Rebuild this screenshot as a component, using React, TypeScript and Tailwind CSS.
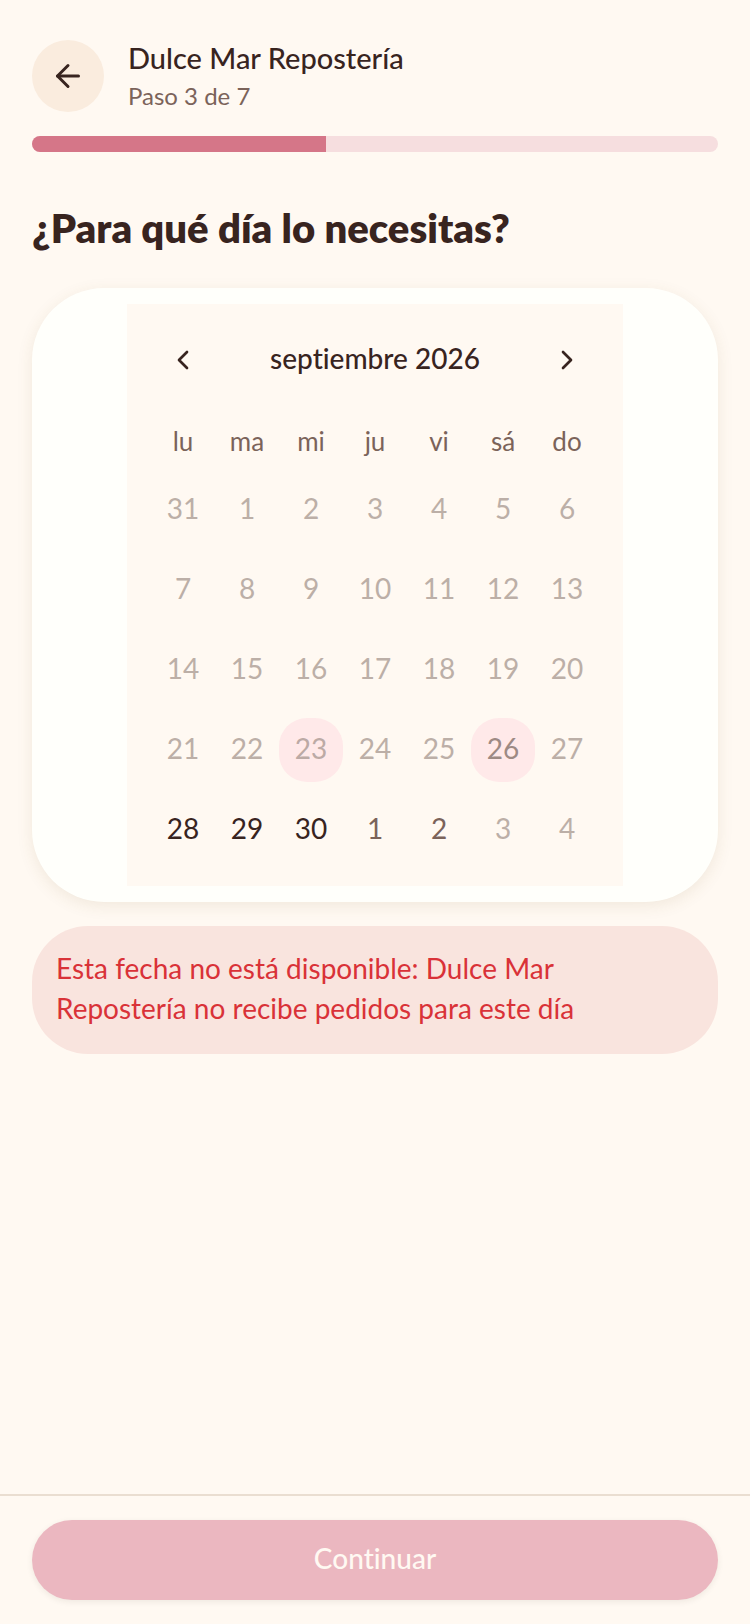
import { useState } from "react";
import { ArrowLeft, ChevronLeft, ChevronRight } from "lucide-react";

interface Day {
    num: number;
    state: "disabled" | "today" | "blocked" | "available" | "outside";
}

const STEP = 3;
const TOTAL_STEPS = 7;

const weekdays = ["lu", "ma", "mi", "ju", "vi", "sá", "do"];

const dayStyles = {
    disabled: "text-[#bcafa7]",
    today: "bg-[#ffe9e9] text-[#bcaaa5]",
    blocked: "bg-[#ffe9e9] text-[#9d8a84]",
    available: "text-[#38241f]",
    outside: "text-[#7b635a]",
};

const disabledDays = (nums: number[]): Day[] => nums.map((num) => ({ num, state: "disabled" }));

const weeks: Day[][] = [
    disabledDays([31, 1, 2, 3, 4, 5, 6]),
    disabledDays([7, 8, 9, 10, 11, 12, 13]),
    disabledDays([14, 15, 16, 17, 18, 19, 20]),
    [
        ...disabledDays([21, 22]),
        { num: 23, state: "today" },
        ...disabledDays([24, 25]),
        { num: 26, state: "blocked" },
        ...disabledDays([27]),
    ],
    [
        { num: 28, state: "available" },
        { num: 29, state: "available" },
        { num: 30, state: "available" },
        { num: 1, state: "outside" },
        { num: 2, state: "outside" },
        ...disabledDays([3, 4]),
    ],
];

function Header() {
    return (
        <header className="px-8 pt-10">
            <div className="flex items-center gap-6">
                <button aria-label="Volver" className="flex size-18 items-center justify-center rounded-full bg-[#faecde]">
                    <ArrowLeft className="size-9" />
                </button>
                <div className="flex flex-col gap-1">
                    <p className="text-[29px] leading-9 font-medium">Dulce Mar Repostería</p>
                    <p className="text-2xl leading-8 text-[#7b635a]">Paso {STEP} de {TOTAL_STEPS}</p>
                </div>
            </div>
            <div className="mt-6 h-4 overflow-hidden rounded-full bg-[#f6dedf]">
                <div className="h-full bg-[#d57688]" style={{ width: `${(STEP / TOTAL_STEPS) * 100}%` }} />
            </div>
        </header>
    );
}

function Calendar() {
    const [selected, setSelected] = useState("");

    return (
        <div className="w-fit bg-[#fff9f2] p-6">
            <div className="flex h-16 items-center justify-between">
                <button aria-label="Mes anterior" className="flex size-16 items-center justify-center">
                    <ChevronLeft className="size-8" />
                </button>
                <p className="pb-1 text-[28px] leading-10 font-medium">septiembre 2026</p>
                <button aria-label="Mes siguiente" className="flex size-16 items-center justify-center">
                    <ChevronRight className="size-8" />
                </button>
            </div>

            <table className="mt-8 block">
                <thead className="block">
                    <tr className="flex">
                        {weekdays.map((day) => (
                            <th key={day} scope="col" className="w-16 pb-1 text-[26px] leading-[34px] font-normal text-[#7b635a]">{day}</th>
                        ))}
                    </tr>
                </thead>
                <tbody className="block">
                    {weeks.map((week, i) => (
                        <tr key={i} className="mt-4 flex">
                            {week.map((day) => (
                                <td key={day.num} className="size-16">
                                    <button
                                        disabled={day.state !== "available" && day.state !== "outside"}
                                        aria-pressed={selected === `${i}-${day.num}`}
                                        onClick={() => setSelected(`${i}-${day.num}`)}
                                        className={`size-16 rounded-[28px] pb-1 text-[28px] leading-10 aria-pressed:bg-[#faecde] ${dayStyles[day.state]}`}
                                    >
                                        {day.num}
                                    </button>
                                </td>
                            ))}
                        </tr>
                    ))}
                </tbody>
            </table>
        </div>
    );
}

export default function App() {
    return (
        <div className="flex min-h-screen flex-col bg-[#fff9f2] font-['Lato','Noto_Sans',sans-serif] text-[#38241f] [font-variant-ligatures:none]">
            <Header />

            <main className="flex flex-1 flex-col px-8 pt-12 pb-8">
                <h1 className="text-[40px] leading-14 font-extrabold">¿Para qué día lo necesitas?</h1>

                <div className="mt-8 flex justify-center rounded-[72px] bg-[#fffffb] p-4 shadow-[0_4px_16px_rgba(120,90,40,0.1)]">
                    <Calendar />
                </div>

                <div role="alert" className="mt-6 rounded-[56px] bg-[#f9e4de] pt-[22px] pr-12 pb-[26px] pl-6 text-[28px] leading-10 text-[#d93238]">
                    <p>Esta fecha no está disponible: Dulce Mar Repostería no recibe pedidos para este día</p>
                </div>
            </main>

            <footer className="border-t-2 border-[#eaded1] px-8 py-6">
                <button disabled className="h-20 w-full rounded-full bg-[#ebb7c0] pb-1 text-[28px] leading-10 font-medium text-[#fff9f2] shadow-[0_2px_6px_rgba(56,36,31,0.08)]">
                    Continuar
                </button>
            </footer>
        </div>
    );
}
